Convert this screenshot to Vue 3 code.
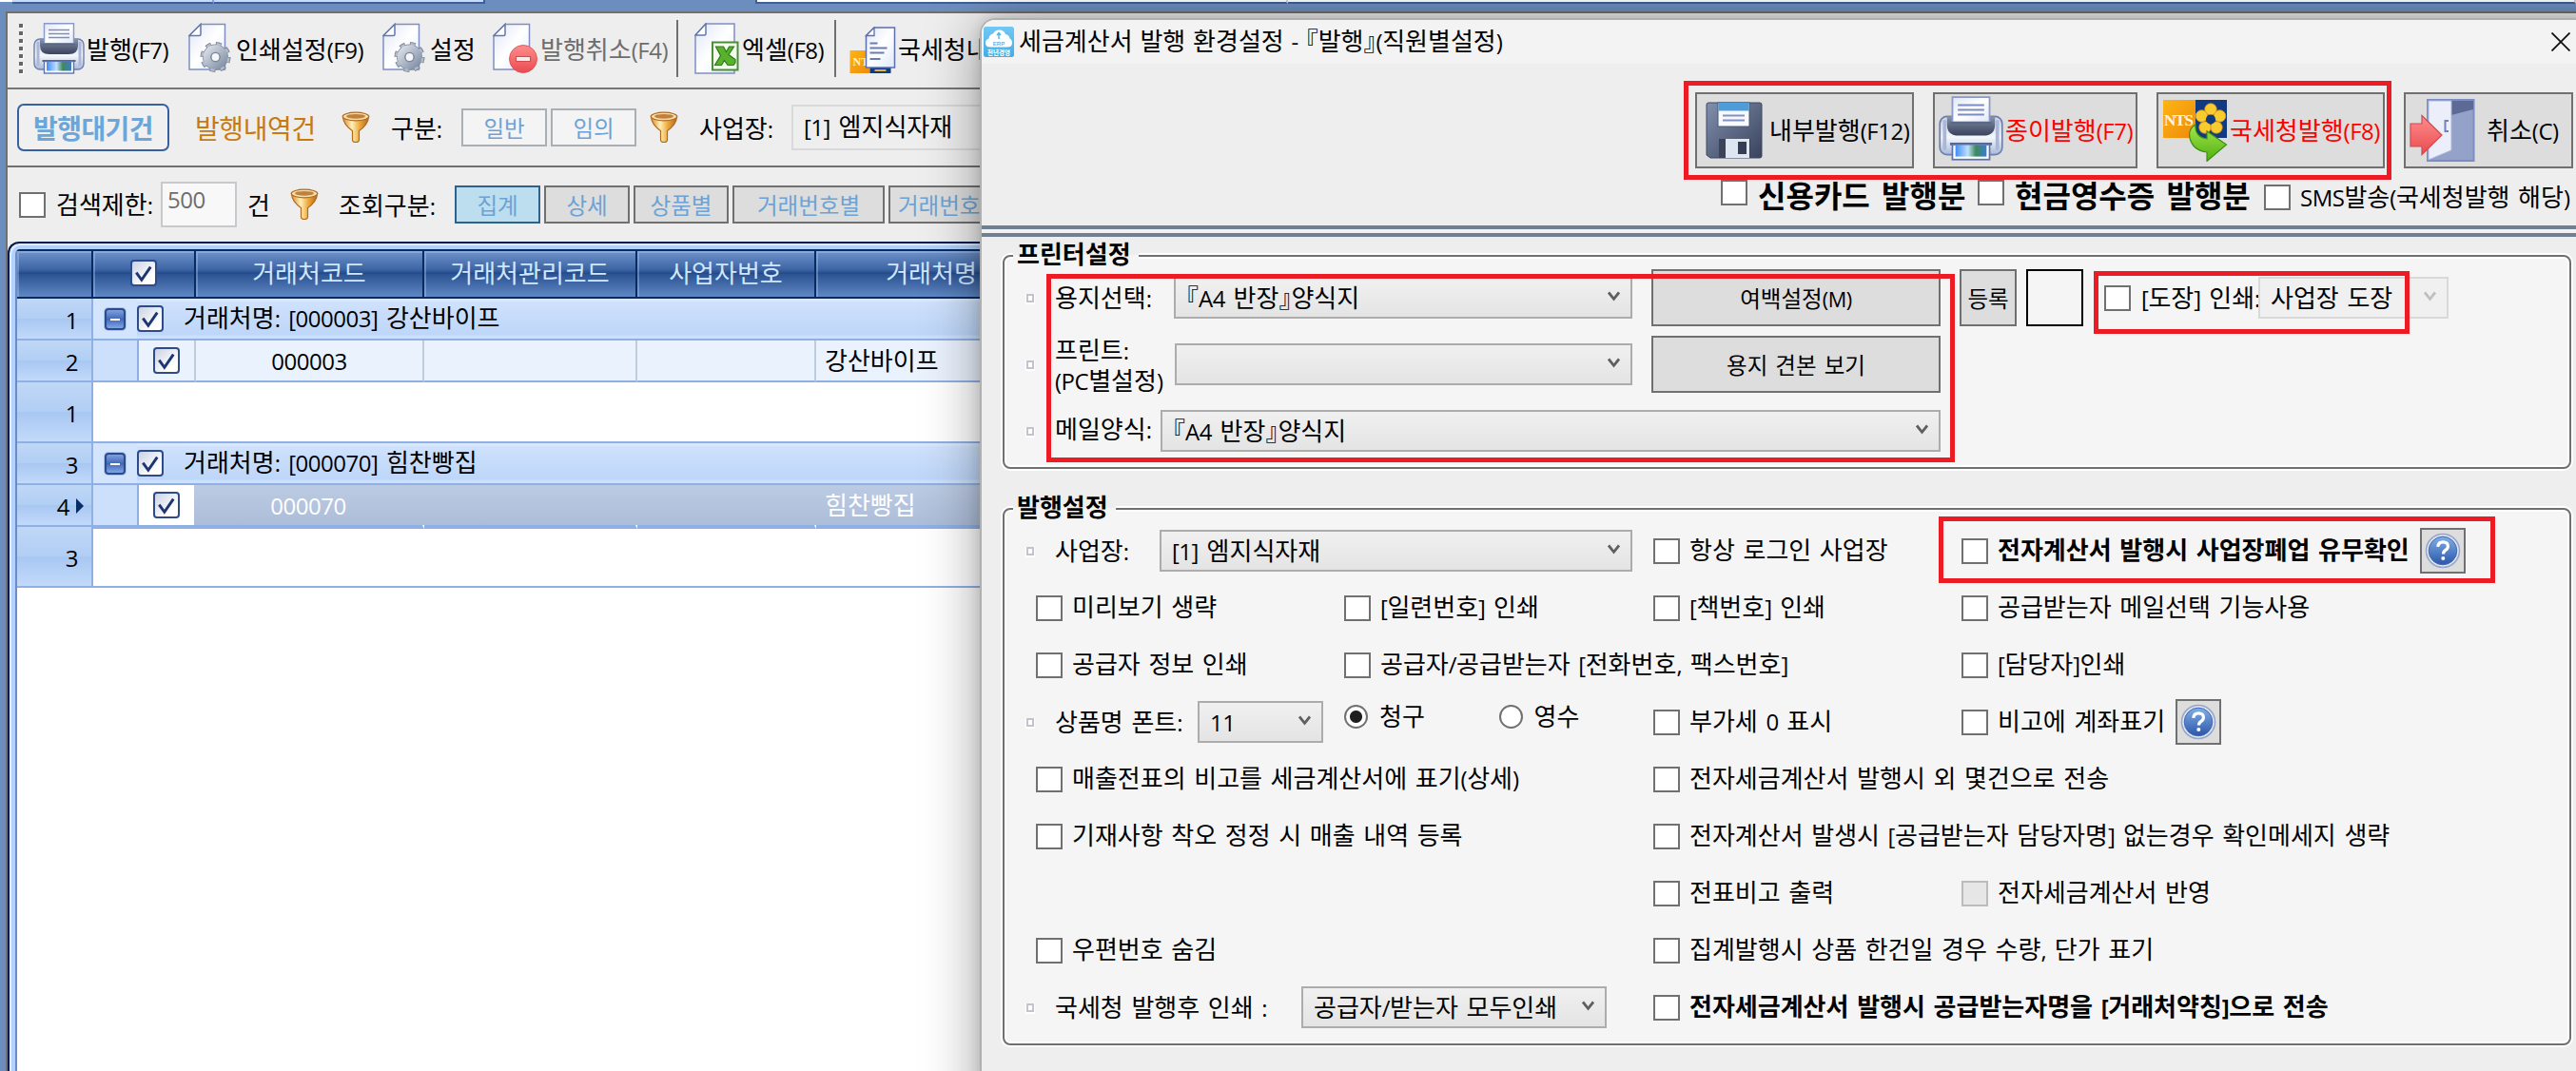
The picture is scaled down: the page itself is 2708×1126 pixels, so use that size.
<template>
    <div class="screen">
        <!-- Shared icon shapes -->
        <svg class="sprite" aria-hidden="true">
            <defs>
                <linearGradient id="gPaper" x1="0" y1="0" x2="1" y2="1">
                    <stop offset="0" stop-color="#dfe6f5" />
                    <stop offset=".5" stop-color="#ffffff" />
                    <stop offset="1" stop-color="#dfe8f8" />
                </linearGradient>
                <linearGradient id="gBody" x1="0" y1="0" x2="0" y2="1">
                    <stop offset="0" stop-color="#c9d2e6" />
                    <stop offset=".55" stop-color="#f4f7fb" />
                    <stop offset="1" stop-color="#a9b8d8" />
                </linearGradient>
                <linearGradient id="gRoller" x1="0" y1="0" x2="0" y2="1">
                    <stop offset="0" stop-color="#8793ad" />
                    <stop offset=".5" stop-color="#5d6880" />
                    <stop offset="1" stop-color="#39435c" />
                </linearGradient>
                <linearGradient id="gPhoto" x1="0" y1="0" x2="1" y2="0">
                    <stop offset="0" stop-color="#3f8dfa" />
                    <stop offset=".4" stop-color="#bfe0ff" />
                    <stop offset=".65" stop-color="#3d8a5a" />
                    <stop offset="1" stop-color="#3c7cd0" />
                </linearGradient>
                <linearGradient id="gGear" x1="0" y1="0" x2="1" y2="1">
                    <stop offset="0" stop-color="#d7dde6" />
                    <stop offset="1" stop-color="#8592a8" />
                </linearGradient>
                <linearGradient id="gGold" x1="0" y1="0" x2="1" y2="0">
                    <stop offset="0" stop-color="#d98a2b" />
                    <stop offset=".35" stop-color="#fff0b8" />
                    <stop offset=".65" stop-color="#eda93c" />
                    <stop offset="1" stop-color="#b5651a" />
                </linearGradient>
                <linearGradient id="gRed" x1="0" y1="0" x2="0" y2="1">
                    <stop offset="0" stop-color="#ff8d8d" />
                    <stop offset="1" stop-color="#e94b50" />
                </linearGradient>
                <linearGradient id="gSteel" x1="0" y1="0" x2="1" y2="1">
                    <stop offset="0" stop-color="#8190ac" />
                    <stop offset="1" stop-color="#39425c" />
                </linearGradient>
                <linearGradient id="gSky" x1="0" y1="0" x2="0" y2="1">
                    <stop offset="0" stop-color="#72c8f3" />
                    <stop offset="1" stop-color="#43ade6" />
                </linearGradient>
                <linearGradient id="gOrange" x1="0" y1="0" x2="1" y2="1">
                    <stop offset="0" stop-color="#fdb515" />
                    <stop offset="1" stop-color="#ee8a0a" />
                </linearGradient>
                <linearGradient id="gGreen" x1="0" y1="0" x2="0" y2="1">
                    <stop offset="0" stop-color="#a5e84a" />
                    <stop offset="1" stop-color="#4fae12" />
                </linearGradient>
                <linearGradient id="gHelp" x1="0" y1="0" x2="0" y2="1">
                    <stop offset="0" stop-color="#7fb0e6" />
                    <stop offset="1" stop-color="#2c56ab" />
                </linearGradient>
            </defs>

            <symbol id="printer" viewBox="0 0 54 54">
                <rect x="1" y="17" width="52" height="32" rx="6" fill="url(#gBody)" stroke="#6f7fae" stroke-width="1.4" />
                <path d="M5 20v25M49 20v25" stroke="#aab7d6" stroke-width="3" />
                <path d="M7 17h40v7q0 9-10 9H17q-10 0-10-9z" fill="url(#gRoller)" />
                <path d="M11.500 .800h31v21h-31z" fill="url(#gPaper)" stroke="#8a99c8" stroke-width="1.4" />
                <path d="M16 7.500h22M16 11.500h22M16 15.500h22" stroke="#7c8cc0" stroke-width="1.5" />
                <path d="M10 22.500h34" stroke="#5b6886" stroke-width="2" />
                <path d="M9.500 40h35" stroke="#56648c" stroke-width="2" />
                <rect x="11.500" y="40.500" width="31" height="12.500" fill="#fff" stroke="#5f73ae" stroke-width="1.400" />
                <rect x="14" y="41" width="26" height="9.500" fill="url(#gPhoto)" />
            </symbol>

            <symbol id="page" viewBox="0 0 48 54">
                <path d="M1 13.500 13 1.500h25.500V49H1z" fill="url(#gPaper)" stroke="#7f8ec4" stroke-width="1.500" />
                <path d="M1 13.500 13 1.500v10.500q0 1.500-1.500 1.500z" fill="#fff" stroke="#6577b0" stroke-width="1.500" />
            </symbol>

            <symbol id="gear" viewBox="0 0 36 36">
                <circle cx="18" cy="18" r="14.500" fill="none" stroke="#7c8899" stroke-width="5" stroke-dasharray="6 5.390" />
                <circle cx="18" cy="18" r="9.500" fill="none" stroke="#7c8899" stroke-width="9.500" />
                <circle cx="18" cy="18" r="14" fill="none" stroke="#b4bcc9" stroke-width="4" stroke-dasharray="4.400 6.600" stroke-dashoffset="-.8" />
                <circle cx="18" cy="18" r="9.500" fill="none" stroke="url(#gGear)" stroke-width="8" />
                <circle cx="18" cy="18" r="4.800" fill="#f4f6f9" stroke="#7c8899" stroke-width="1.300" />
            </symbol>

            <symbol id="funnel" viewBox="0 0 30 34">
                <path d="M1.500 6q.5 8 10 14.500V30q0 2.500 3.500 2.500t3.500-2.500v-9.500Q28 14 28.500 6z" fill="url(#gGold)" stroke="#b06a22" stroke-width="1.200" />
                <ellipse cx="15" cy="5.500" rx="13.800" ry="4.300" fill="#f6dfa8" stroke="#b06a22" stroke-width="1.200" />
                <ellipse cx="15" cy="5.300" rx="10" ry="2.400" fill="#c08040" />
            </symbol>

            <symbol id="help" viewBox="0 0 38 38">
                <circle cx="19" cy="19" r="17.500" fill="#dfe6f3" stroke="#97a5c8" stroke-width="1.500" />
                <circle cx="19" cy="19" r="14.800" fill="url(#gHelp)" stroke="#4468ad" />
                <path d="M13.800 14.800q.4-5 5.400-5 5.200 0 5.200 4.400 0 2.600-2.500 4.200-2.400 1.500-2.400 4" fill="none" stroke="#fff" stroke-width="3.200" />
                <circle cx="19.300" cy="27" r="2" fill="#fff" />
            </symbol>

            <symbol id="tick" viewBox="0 0 28 28">
                <path d="M5 13.500 11.500 22.500 22.500 6.500" fill="none" stroke="#1d3571" stroke-width="3.400" />
            </symbol>

            <symbol id="chevron" viewBox="0 0 13 11">
                <path d="M1 1.500 6.500 8.300 12 1.500" fill="none" stroke="currentColor" stroke-width="2.800" />
            </symbol>
        </svg>

        <!-- Document tabs above the frame -->
        <div class="tab-strip">
            <div class="tab-blue first"></div>
            <div class="tab-blue second"></div>
            <div class="tab-gap"></div>
            <div class="tab-white"></div>
            <div class="tab-white rest"></div>
        </div>

        <div class="frame">
            <div class="window">
                <!-- Main toolbar -->
                <div class="toolbar">
                    <div class="grip"><i v-for="n in 7" :key="n"></i></div>
                    <div class="tool t-issue">
                        <svg class="ic54"><use href="#printer" /></svg>
                        <T text="발행(F7)" />
                    </div>
                    <div class="tool t-print">
                        <svg class="ic-page" viewBox="0 0 48 54">
                            <use href="#page" width="48" height="54" />
                            <use href="#gear" x="11.500" y="19" width="34" height="34" />
                        </svg>
                        <T text="인쇄설정(F9)" />
                    </div>
                    <div class="tool t-setup">
                        <svg class="ic-page" viewBox="0 0 48 54">
                            <use href="#page" width="48" height="54" />
                            <use href="#gear" x="11.500" y="19" width="34" height="34" />
                        </svg>
                        <T text="설정" />
                    </div>
                    <div class="tool t-cancel">
                        <svg class="ic-page" viewBox="0 0 48 54">
                            <use href="#page" width="48" height="54" />
                            <circle cx="32" cy="38" r="14.500" fill="url(#gRed)" stroke="#d9484c" stroke-width=".8" />
                            <rect x="24.500" y="35.500" width="15" height="5" fill="#fbe9ea" stroke="#d04a50" />
                        </svg>
                        <T text="발행취소(F4)" />
                    </div>
                    <div class="sep"></div>
                    <div class="tool t-excel">
                        <svg class="ic-page" viewBox="0 0 48 54">
                            <path d="M1 13 12 1h30v52H1z" fill="url(#gPaper)" stroke="#7f8ec4" stroke-width="1.500" />
                            <path d="M1 13 12 1v10.500q0 1.500-1.500 1.500z" fill="#fff" stroke="#6577b0" stroke-width="1.500" />
                            <rect x="19" y="20.500" width="26.500" height="29" fill="#f4fbef" stroke="#4c8e37" stroke-width="2" />
                            <path d="M22.500 25h8l3 5.500 3-5.500h5l-5.500 8.500 7 5v3.500l-2 2.500h-6l-3.500-5-3 5h-7l6-10z" fill="#58b22c" stroke="#2e7a1c" stroke-width="1.200" />
                        </svg>
                        <T text="엑셀(F8)" />
                    </div>
                    <div class="sep"></div>
                    <div class="tool t-nts">
                        <svg class="ic-nts" viewBox="0 0 48 50">
                            <rect x="0" y="25" width="21" height="24" fill="url(#gOrange)" />
                            <text x="3" y="41" class="nts-sm">NT</text>
                            <rect x="21" y="40" width="22" height="9" fill="#12397f" />
                            <path d="M26 46h12" stroke="#e4b52c" stroke-width="2" />
                            <path d="M17 9.500 25.500 1H47v42H17z" fill="url(#gPaper)" stroke="#5c6fae" stroke-width="1.500" />
                            <path d="M17 9.500 25.500 1v8.500z" fill="#fff" stroke="#5c6fae" stroke-width="1.300" />
                            <path d="M21 17.500h8M21 22.500h18M21 27.500h15M21 34h11" stroke="#6b7cb4" stroke-width="2" />
                        </svg>
                        <T text="국세청내" />
                    </div>
                </div>

                <!-- Filter row -->
                <div class="filters">
                    <button class="mode active">발행대기건</button>
                    <button class="mode history">발행내역건</button>
                    <svg class="funnel f1"><use href="#funnel" /></svg>
                    <T class="w-kind" text="구분:" />
                    <button class="chip pale">일반</button>
                    <button class="chip pale">임의</button>
                    <svg class="funnel f2"><use href="#funnel" /></svg>
                    <T class="w-place" text="사업장:" />
                    <div class="place-box"><T text="[1] 엠지식자재" /></div>
                </div>

                <!-- Search row -->
                <div class="search">
                    <span class="check"></span>
                    <T class="w-limit" text="검색제한:" />
                    <div class="limit-box"><T text="500" /></div>
                    <T class="w-count" text="건" />
                    <svg class="funnel f3"><use href="#funnel" /></svg>
                    <T class="w-view" text="조회구분:" />
                    <button v-for="(view, i) in views" :key="view" class="chip" :class="['v' + i, { on: i === 0 }]">{{ view }}</button>
                </div>

                <!-- Customer grid -->
                <div class="grid">
                    <div class="grid-inner">
                        <div class="g-head">
                            <div class="h-cell c-num"></div>
                            <div class="h-cell c-check"><span class="gcheck"><svg><use href="#tick" /></svg></span></div>
                            <div class="h-cell c-code">거래처코드</div>
                            <div class="h-cell c-manage">거래처관리코드</div>
                            <div class="h-cell c-biz">사업자번호</div>
                            <div class="h-cell c-name">거래처명</div>
                        </div>
                        <template v-for="group in groups" :key="group.code">
                            <div class="g-row">
                                <div class="num"><T :text="group.no" /></div>
                                <div class="g-group">
                                    <span class="collapse"></span>
                                    <span class="gcheck"><svg><use href="#tick" /></svg></span>
                                    <T class="g-title" :text="`거래처명: [${group.code}] ${group.name}`" />
                                </div>
                            </div>
                            <div class="g-row" :class="{ selected: group.selected }">
                                <div class="num">
                                    <T :text="group.childNo" />
                                    <i v-if="group.selected" class="pointer"></i>
                                </div>
                                <div class="indent"></div>
                                <div class="d-cell d-check"><span class="gcheck"><svg><use href="#tick" /></svg></span></div>
                                <div class="d-cell c-code"><T :text="group.code" /></div>
                                <div class="d-cell c-manage"></div>
                                <div class="d-cell c-biz"></div>
                                <div class="d-cell c-name d-name">{{ group.name }}</div>
                            </div>
                            <div class="g-row footer" :class="{ short: group.selected }">
                                <div class="num"><T :text="group.no" /></div>
                                <div class="blank"></div>
                            </div>
                        </template>
                    </div>
                </div>
            </div>
        </div>

        <!-- Settings dialog -->
        <div class="dialog">
            <div class="title-bar">
                <svg class="app-icon" viewBox="0 0 32 32">
                    <rect width="32" height="32" rx="2.500" fill="url(#gSky)" />
                    <path d="M7 21.500q-5 0-5-4.500 0-3.500 3.500-4.500Q6 8 10 7.500q2-4 6.500-4 5 0 6.500 4.500 4 .5 4.500 4.500 2.500 1 2.500 4.500 0 4.500-5 4.500z" fill="#fff" />
                    <path d="M16 13V7M14 9l2-2.500L18 9" stroke="#56b8ea" stroke-width="1.500" fill="none" />
                    <text x="16" y="19.500" class="erp">ERP</text>
                    <text x="16" y="29.500" class="erp-sub">천년경영</text>
                </svg>
                <T class="title" text="세금계산서 발행 환경설정 - 『발행』(직원별설정)" />
                <svg class="close" viewBox="0 0 20 20"><path d="M.5.500l19 19M19.500.500l-19 19" stroke="#111" stroke-width="1.800" /></svg>
            </div>

            <div class="actions">
                <button class="action a-inner">
                    <svg class="floppy" viewBox="0 0 60 60">
                        <path d="M3 1h54q2 0 2 2v54q0 2-2 2H5l-4-3V3q0-2 2-2z" fill="url(#gSteel)" stroke="#3d4866" />
                        <rect x="13" y="1" width="33" height="25" fill="#f7f9fd" stroke="#4a5878" />
                        <rect x="13.500" y="1" width="32" height="8.500" fill="#4f9cda" />
                        <path d="M18 14.500h23M18 19.500h23" stroke="#8191c4" stroke-width="2" />
                        <path d="M14 39h33v20H14z" fill="#3c4259" />
                        <path d="M21 39h25v20H21z" fill="#dde6f1" />
                        <rect x="34" y="42" width="9" height="13" fill="#353d55" />
                    </svg>
                    <T text="내부발행(F12)" />
                </button>
                <button class="action a-paper">
                    <svg class="ic70"><use href="#printer" /></svg>
                    <T text="종이발행(F7)" />
                </button>
                <button class="action a-nts">
                    <svg class="nts" viewBox="0 0 68 66">
                        <rect x="0" y="1" width="34" height="40" fill="url(#gOrange)" />
                        <text x="1" y="28" class="nts-lg">NTS</text>
                        <rect x="34" y="1" width="33" height="40" fill="#123a80" />
                        <g fill="#f8cb2e" stroke="#e09b12" stroke-width=".8">
                            <circle cx="50" cy="11" r="6.200" />
                            <circle cx="59.500" cy="18" r="6.200" />
                            <circle cx="56" cy="30" r="6.200" />
                            <circle cx="44" cy="30" r="6.200" />
                            <circle cx="40.500" cy="18" r="6.200" />
                        </g>
                        <circle cx="50" cy="21.500" r="5" fill="#123a80" />
                        <path d="M34 27q-8 5-6 14 3 13 18 15v9.500L66.500 48 46 34v8q-13-2-12-15z" fill="url(#gGreen)" stroke="#3b8f12" stroke-width="1.200" />
                    </svg>
                    <T text="국세청발행(F8)" />
                </button>
                <button class="action a-close">
                    <svg class="door" viewBox="0 0 70 66">
                        <rect x="19" y="1" width="48.500" height="64" fill="#94a2ca" stroke="#7c8cc4" stroke-width="2" />
                        <path d="M44 2h23v9L44 17z" fill="#5d6a95" />
                        <path d="M20 2h24v52L20 64z" fill="#eceff9" stroke="#a9b5db" />
                        <path d="M41 23h-3.500v11H41" fill="none" stroke="#7182bb" stroke-width="2" />
                        <path d="M1 26h12v-8.500L34 38 13 58.500V50H1z" fill="url(#gRed)" stroke="#cf4a50" stroke-width="1.200" />
                    </svg>
                    <T text="취소(C)" />
                </button>
            </div>
            <div class="sends">
                <span class="check raised"></span><b class="w-card">신용카드 발행분</b>
                <span class="check raised"></span><b class="w-cash">현금영수증 발행분</b>
                <span class="check"></span>
                <T class="w-sms" text="SMS발송(국세청발행 해당)" />
            </div>
            <div class="divider"></div>

            <div class="panel printer-panel">
                <div class="legend">프린터설정</div>
                <div class="line">
                    <i class="bullet"></i>
                    <T class="label" text="용지선택:" />
                    <div class="combo w-paper"><T text="『A4 반장』양식지" /><svg><use href="#chevron" /></svg></div>
                    <button class="plain"><T text="여백설정(M)" /></button>
                    <button class="plain small">등록</button>
                    <div class="stamp"></div>
                    <span class="check"></span>
                    <T class="w-stamp" text="[도장] 인쇄:" />
                    <div class="combo disabled"><T text="사업장 도장" /><svg><use href="#chevron" /></svg></div>
                </div>
                <div class="line">
                    <i class="bullet"></i>
                    <div class="label two">
                        <T text="프린트:" />
                        <T text="(PC별설정)" />
                    </div>
                    <div class="combo w-printer"><svg><use href="#chevron" /></svg></div>
                    <button class="plain">용지 견본 보기</button>
                </div>
                <div class="line">
                    <i class="bullet"></i>
                    <T class="label mail" text="메일양식:" />
                    <div class="combo w-mail"><T text="『A4 반장』양식지" /><svg><use href="#chevron" /></svg></div>
                </div>
            </div>

            <div class="panel issue-panel">
                <div class="legend issue">발행설정</div>
                <div class="options">
                    <div class="field r1">
                        <i class="bullet"></i>
                        <T class="label mail" text="사업장:" />
                        <div class="combo w-office"><T text="[1] 엠지식자재" /><svg><use href="#chevron" /></svg></div>
                    </div>
                    <div class="field r4">
                        <i class="bullet"></i>
                        <T class="label font" text="상품명 폰트:" />
                        <div class="combo w-size"><T text="11" /><svg><use href="#chevron" /></svg></div>
                    </div>
                    <div class="radios">
                        <span class="radio on"></span><span class="w-radio">청구</span>
                        <span class="radio"></span><span class="w-radio">영수</span>
                    </div>
                    <div class="field r9">
                        <i class="bullet"></i>
                        <T class="label after" text="국세청 발행후 인쇄 :" />
                        <div class="combo w-after"><T text="공급자/받는자 모두인쇄" /><svg><use href="#chevron" /></svg></div>
                    </div>
                    <div v-for="opt in options" :key="opt.text" class="option" :class="{ strong: opt.bold }"
                        :style="{ gridArea: `${opt.row} / ${opt.col}` }">
                        <span class="check" :class="{ off: opt.off }"></span>
                        <T :text="opt.text" />
                        <button v-if="opt.help" class="help"><svg><use href="#help" /></svg></button>
                    </div>
                </div>
            </div>
        </div>

        <!-- Red highlight frames -->
        <div class="mark m-actions"></div>
        <div class="mark m-printer"></div>
        <div class="mark m-stamp"></div>
        <div class="mark m-closed"></div>
    </div>
</template>

<script setup>
import { h } from 'vue'

// Latin runs and corner brackets get their own metrics inside Korean text
const T = (props) => h('span', { class: 'ui-text' }, props.text.split(/([\x21-\x7e]+|[『』])/).map((part) => {
    if (/^[『』]$/.test(part)) return h('span', { class: 'ui-half' }, part)
    if (/^[\x21-\x7e]+$/.test(part)) return h('span', { class: 'ui-latin' }, part)
    return part
}))
T.props = ['text']

const views = ['집계', '상세', '상품별', '거래번호별', '거래번호']

const groups = [
    { no: '1', childNo: '2', code: '000003', name: '강산바이프', selected: false },
    { no: '3', childNo: '4', code: '000070', name: '힘찬빵집', selected: true }
]

const options = [
    { row: 1, col: 3, text: '항상 로그인 사업장' },
    { row: 1, col: 4, text: '전자계산서 발행시 사업장폐업 유무확인', bold: true, help: true },
    { row: 2, col: 1, text: '미리보기 생략' },
    { row: 2, col: 2, text: '[일련번호] 인쇄' },
    { row: 2, col: 3, text: '[책번호] 인쇄' },
    { row: 2, col: 4, text: '공급받는자 메일선택 기능사용' },
    { row: 3, col: 1, text: '공급자 정보 인쇄' },
    { row: 3, col: 2, text: '공급자/공급받는자 [전화번호, 팩스번호]' },
    { row: 3, col: 4, text: '[담당자]인쇄' },
    { row: 4, col: 3, text: '부가세 0 표시' },
    { row: 4, col: 4, text: '비고에 계좌표기', help: true },
    { row: 5, col: 1, text: '매출전표의 비고를 세금계산서에 표기(상세)' },
    { row: 5, col: 3, text: '전자세금계산서 발행시 외 몇건으로 전송' },
    { row: 6, col: 1, text: '기재사항 착오 정정 시 매출 내역 등록' },
    { row: 6, col: 3, text: '전자계산서 발생시 [공급받는자 담당자명] 없는경우 확인메세지 생략' },
    { row: 7, col: 3, text: '전표비고 출력' },
    { row: 7, col: 4, text: '전자세금계산서 반영', off: true },
    { row: 8, col: 1, text: '우편번호 숨김' },
    { row: 8, col: 3, text: '집계발행시 상품 한건일 경우 수량, 단가 표기' },
    { row: 9, col: 3, text: '전자세금계산서 발행시 공급받는자명을 [거래처약칭]으로 전송', bold: true }
]
</script>

<style>
body {
    margin: 0;
}

.ui-text {
    white-space: nowrap;
}

.ui-latin {
    font-family: "Open Sans", "Noto Sans", sans-serif;
    font-size: 0.923em;
    letter-spacing: -0.02em;
    line-height: 1;
}

.ui-half {
    font-feature-settings: "halt";
}
</style>

<style scoped>
.screen {
    position: relative;
    display: flex;
    flex-direction: column;
    width: 2708px;
    height: 1126px;
    overflow: hidden;
    background: #6c8ebf;
    font-family: "Noto Sans CJK KR", "Noto Sans", sans-serif;
    font-size: 26px;
    line-height: 32px;
    word-spacing: 2.8px;
    color: #000;
    white-space: nowrap;
}

.screen *,
.mark {
    box-sizing: border-box;
}

.sprite {
    position: absolute;
    width: 0;
    height: 0;
}

button {
    font: inherit;
    word-spacing: inherit;
    padding: 0;
    margin: 0;
    border-radius: 0;
    color: inherit;
    flex-shrink: 0;
}

svg,
i,
.check {
    flex-shrink: 0;
    display: block;
}

/* Tabs */
.tab-strip {
    display: flex;
    height: 4px;
    flex-shrink: 0;
    padding-left: 13px;
    background: linear-gradient(#fff 2px, #6c8ebf 2px);
}

.tab-blue {
    border-bottom: 2px solid #415f96;
    border-right: 2px solid #7f9fe0;
    background: #c7dafa;
}

.tab-blue.first {
    width: 212px;
}

.tab-blue.second {
    width: 285px;
    border-right-color: #415f96;
}

.tab-gap {
    width: 284px;
    background: #6c8ebf;
}

.tab-white {
    width: 560px;
    border-bottom: 2px solid #415f96;
    border-right: 2px solid #ccd2dc;
    border-left: 2px solid #415f96;
    background: #fff;
}

.tab-white.rest {
    flex: 1;
    border-left: 0;
}

/* Frame */
.frame {
    flex: 1;
    display: flex;
    padding: 8px 0 0 6px;
}

.window {
    flex: 1;
    display: flex;
    flex-direction: column;
    border-top: 2px solid #707070;
    border-left: 2px solid #707070;
    background: #eee;
}

/* Toolbar */
.toolbar {
    display: flex;
    align-items: center;
    height: 80px;
    padding: 0 0 4px 12px;
    border-bottom: 2px solid #767676;
}

.grip {
    width: 15px;
    display: flex;
    flex-direction: column;
    gap: 4px;
}

.grip i {
    width: 4px;
    height: 4px;
    background: #666;
    box-shadow: 1px 1px 0 #fff;
}

.tool {
    display: flex;
    align-items: center;
    gap: 2px;
}

.t-issue { width: 163px; }
.t-print { width: 204px; }
.t-setup { width: 116px; }
.t-cancel { width: 193px; color: #6d6d6d; }
.t-excel { width: 147px; margin-left: 17px; }
.t-nts { margin-left: 14px; }

.ic54 {
    width: 54px;
    height: 54px;
}

.ic-page {
    width: 48px;
    height: 54px;
}

.ic-nts {
    width: 49px;
    height: 50px;
    margin-top: 4px;
}

.nts-sm {
    font: bold 12px "Liberation Serif", serif;
    fill: #fff3d0;
}

.sep {
    width: 2px;
    height: 60px;
    background: #707070;
}

/* Filter row */
.filters {
    display: flex;
    align-items: center;
    height: 82px;
    padding-left: 10px;
    border-bottom: 2px solid #707070;
}

.mode {
    border: 0;
    background: none;
    font-size: 28px;
}

.mode.active {
    width: 160px;
    height: 50px;
    border: 2px solid #36609f;
    border-radius: 7px;
    background: #f0f0f0;
    color: #6ca6d9;
    font-weight: bold;
    letter-spacing: -0.6px;
}

.mode.history {
    width: 154px;
    margin-left: 27px;
    text-align: left;
    color: #c67a10;
    letter-spacing: -0.4px;
}

.funnel {
    width: 30px;
    height: 34px;
}

.f1 { margin-right: 22px; }
.f2 { margin: 0 22px 0 14px; }
.f3 { margin-right: 21px; }

.w-kind { width: 74px; margin-top: -1px; }
.w-place { width: 97px; margin-top: -1px; }

.chip {
    height: 40px;
    margin-right: 4px;
    border: 2px solid #707070;
    background: #ddd;
    color: #6ca3d4;
    font-size: 23.500px;
    line-height: 34px;
}

.chip.pale {
    width: 90px;
    border-color: #a9afb3;
    background: #f4f4f4;
}

.chip.pale + .f2 {
    margin-left: 10px;
}

.place-box {
    flex: 1;
    height: 48px;
    border: 2px solid #d9d9d9;
    padding: 4px 0 0 11px;
}

/* Search row */
.search {
    display: flex;
    align-items: center;
    height: 78px;
    padding-left: 12px;
}

.check {
    width: 28px;
    height: 27px;
    border: 2px solid #707070;
    background: #fff;
}

.check.off {
    border-color: #bcbcbc;
    background: #e6e6e6;
}

.w-limit {
    width: 110px;
    margin: -2px 0 0 11px;
}

.limit-box {
    width: 80px;
    height: 48px;
    border: 2px solid #c8c8cd;
    background: #f8f8f8;
    padding: 0 0 0 5px;
    line-height: 30px;
    color: #6d6d6d;
}

.w-count {
    width: 45px;
    margin-left: 11px;
}

.w-view { width: 122px; }

.chip.on {
    border-color: #2c628b;
    background: #bcdeee;
}

.v0,
.v1 { width: 90px; }
.v2 { width: 100px; }
.v3 { width: 160px; }
.v4 { width: 160px; text-align: left; padding-left: 8px; }

/* Grid */
.grid {
    flex: 1;
    border: 2px solid #071a4e;
    border-radius: 12px 0 0 0;
    border-right: 0;
    border-bottom: 0;
    padding: 6px 0 0 6px;
    background: #b3d1fb;
    box-shadow: inset 2px 2px 0 #deebff;
}

.grid-inner {
    height: 100%;
    border-left: 2px solid #6c8cc7;
    border-top: 2px solid #062b66;
    border-radius: 5px 0 0 0;
    background: #fff;
}

.g-head {
    display: flex;
    height: 50px;
    border-bottom: 2px solid #062b66;
}

.h-cell {
    display: flex;
    align-items: center;
    justify-content: center;
    border-right: 2px solid #062b66;
    padding-bottom: 5px;
    color: #cfe7ff;
    background: linear-gradient(#6f93cb, #3d65a4 40%, #244a89 49%, #2c5392 51%, #6088c4);
    box-shadow: inset 2px 2px 0 rgba(190, 215, 250, 0.35);
}

.c-num { width: 80px; }
.c-check { width: 108px; }
.c-code { width: 240px; }
.c-manage { width: 224px; }
.c-biz { width: 188px; }
.c-name { width: 244px; }

.gcheck {
    width: 28px;
    height: 28px;
    flex-shrink: 0;
    border: 2px solid #2d4a8a;
    border-radius: 4px;
    background: linear-gradient(135deg, #ccd2e4, #fff 75%);
}

.gcheck svg {
    width: 24px;
    height: 24px;
}

.h-cell .gcheck {
    margin-top: 3px;
}

.g-row {
    display: flex;
    height: 44px;
}

.num {
    position: relative;
    width: 80px;
    padding: 5px 14px 0 0;
    text-align: right;
    border-right: 2px solid #8fb0e4;
    border-bottom: 2px solid #8fb0e4;
    background: linear-gradient(#c0d8f7, #b1cef4 49%, #a8c7f2 51%, #c2dafa);
}

.selected .num {
    padding-right: 23px;
}

.pointer {
    position: absolute;
    right: 8px;
    top: 14px;
    border: 8px solid transparent;
    border-left-color: #082c66;
    border-right: 0;
}

.g-group {
    flex: 1;
    display: flex;
    align-items: center;
    border-bottom: 2px solid #8fb0e4;
    padding-left: 12px;
    background: linear-gradient(#d8e8ff 2px, #cfe1fc 4px, #bed6f9 38px, #cce0fc 39px);
    box-shadow: inset 46px 0 0 #d3e4fd;
}

.collapse {
    width: 22px;
    height: 23px;
    margin-right: 12px;
    border: 2px solid #2c4a8c;
    border-radius: 4px;
    box-shadow: 0 0 0 1px #a9c3ec;
    background: linear-gradient(#fff, #fff) center 9px / 10px 2px no-repeat, linear-gradient(#7ea0de, #4468b8 50%, #7ea6e6);
}

.g-title {
    margin-left: 21px;
    margin-top: -4px;
}

.indent {
    width: 48px;
    border-right: 2px solid #8fb0e4;
    border-bottom: 2px solid #8fb0e4;
    background: #cce0fc;
}

.d-cell {
    display: flex;
    align-items: center;
    justify-content: center;
    border-right: 2px solid #bfccdc;
    border-bottom: 2px solid #8fb0e4;
    background: #eaf2fd;
}

.d-cell .ui-text {
    margin-top: -2px;
}

.d-check {
    width: 60px;
}

.d-name {
    justify-content: flex-start;
    padding: 0 0 3px 9px;
}

.selected .d-cell {
    border-right-color: transparent;
    background: linear-gradient(#bccbe3, #abbcd8) border-box;
    border-bottom: 4px solid #8fb0e4;
    color: #fff;
}

.selected .d-check {
    width: 58px;
    background: #fff;
    border-right: 0;
}

.selected .c-code {
    width: 242px;
}

.selected {
    height: 46px;
}

.selected .indent {
    border-bottom-width: 4px;
}

.selected .num {
    height: 44px;
}

.footer {
    height: 64px;
}

.footer.short {
    height: 62px;
}

.footer .num {
    padding-top: 15px;
}

.footer.short .num {
    height: 64px;
    margin-top: -2px;
}

.blank {
    flex: 1;
    border-bottom: 2px solid #8fb0e4;
}

/* Dialog */
.dialog {
    position: absolute;
    left: 1030px;
    top: 19px;
    right: 0;
    bottom: -20px;
    overflow: hidden;
    border: 2px solid #b0b0b0;
    border-right: 0;
    border-radius: 16px 0 0 0;
    background: #eee;
}

/* Shadow the dialog casts on the window behind it */
.frame::after {
    content: "";
    position: absolute;
    left: 1030px;
    top: 19px;
    right: -60px;
    bottom: -60px;
    border-radius: 16px;
    box-shadow: 0 8px 60px rgba(0, 0, 0, 0.38), 0 0 14px rgba(0, 0, 0, 0.12);
}

.title-bar {
    display: flex;
    align-items: center;
    height: 46px;
    padding-left: 2px;
    background: #f3f3f3;
}

.app-icon {
    width: 32px;
    height: 32px;
}

.erp {
    font: bold 6px "Liberation Sans", sans-serif;
    fill: #56b8ea;
    text-anchor: middle;
}

.erp-sub {
    font: bold 6.500px "Noto Sans CJK KR", sans-serif;
    fill: #fff;
    text-anchor: middle;
}

.title {
    margin: -5px auto 0 5px;
    word-spacing: 2px;
}

.close {
    width: 20px;
    height: 20px;
    margin-right: 6px;
}

.actions {
    display: flex;
    gap: 20px;
    padding: 30px 0 0 750px;
}

.action {
    display: flex;
    align-items: center;
    height: 80px;
    border: 2px solid #707070;
    background: #ddd;
}

.action .ui-text {
    margin-top: -2px;
}

.a-inner { width: 230px; padding-left: 9px; }
.a-paper { width: 215px; padding-left: 3px; color: #f00; }
.a-nts { width: 240px; padding-left: 5px; color: #f00; }
.a-close { width: 178px; padding-left: 4px; }

.floppy {
    width: 60px;
    height: 60px;
    margin-right: 7px;
}

.ic70 {
    width: 70px;
    height: 68px;
    margin: -5px 1px 0 0;
}

.nts {
    width: 68px;
    height: 66px;
    margin-right: 2px;
}

.nts-lg {
    font: bold 17px "Liberation Serif", serif;
    letter-spacing: -1px;
    fill: #fff6dd;
}

.door {
    width: 70px;
    height: 66px;
    margin-right: 11px;
}

.sends {
    display: flex;
    align-items: center;
    height: 60px;
    padding-left: 777px;
}

.sends b {
    font-size: 32px;
    word-spacing: 5px;
    margin: -6px 0 0 11px;
}

.raised {
    margin-top: -10px;
}

.w-card { width: 231px; }
.w-cash { width: 262px; }
.w-sms { margin: -3px 0 0 10px; }

.divider {
    height: 12px;
    border: solid #708090;
    border-width: 4px 0;
    background: #f2f2f2;
}

.panel {
    width: 1649px;
    margin-left: 22px;
    border: 2px solid #707070;
    border-radius: 8px;
    background: #f5f5f5;
    box-shadow: 0 0 0 2px #fff, inset 0 0 0 2px #fff;
}

.printer-panel {
    height: 225px;
    margin-top: 19px;
}

.issue-panel {
    height: 565px;
    margin-top: 41px;
}

.legend {
    width: 132px;
    height: 26px;
    margin: -15px 0 -3px 9px;
    padding-left: 4px;
    line-height: 22px;
    font-weight: bold;
    background: linear-gradient(#eee 50%, #f5f5f5 50%);
}

.legend.issue {
    width: 108px;
    margin-bottom: 2px;
}

.line {
    display: flex;
    align-items: center;
    height: 70px;
    padding-left: 23px;
}

.bullet {
    width: 8px;
    height: 9px;
    border: 2px solid #c3c3cb;
    background: #fff;
    box-shadow: 0 1px 0 1px #fff;
}

.label {
    width: 125px;
    flex-shrink: 0;
    margin: -2px 0 0 22px;
}

.label.mail { width: 111px; }
.label.font { width: 150px; }
.label.after { width: 259px; }

.line .label.mail {
    margin-top: -6px;
}

.label.two {
    display: flex;
    flex-direction: column;
    width: 126px;
    margin-top: 0;
}

.combo {
    display: flex;
    align-items: center;
    justify-content: space-between;
    flex-shrink: 0;
    height: 44px;
    border: 2px solid #acacac;
    padding: 0 11px 0 11px;
    background: linear-gradient(#f0f0f0, #e4e4e4);
    color: #000;
}

.combo .ui-text {
    margin-top: -2px;
}

.combo svg {
    width: 13px;
    height: 11px;
    margin: -4px 0 0 auto;
    color: #5f5f5f;
}

.combo.disabled {
    width: 200px;
    border-color: #d9d9d9;
    background: #f0f0f0;
}

.combo.disabled svg {
    color: #bfbfbf;
}

.w-paper { width: 482px; }
.w-printer { width: 481px; }
.w-mail { width: 820px; }
.w-office { width: 497px; }
.w-size { width: 132px; }
.w-after { width: 321px; }

/* The office combo starts a little left of the paper one */
.r1 .combo {
    margin-left: -1px;
}

.plain {
    width: 304px;
    height: 60px;
    margin-left: 20px;
    border: 2px solid #707070;
    background: #ddd;
    font-size: 23.500px;
}

.plain.small {
    width: 60px;
}

.stamp {
    width: 60px;
    height: 60px;
    margin: 0 22px 0 10px;
    border: 2px solid #000;
}

.w-stamp {
    width: 123px;
    margin: -2px 0 0 11px;
}

.options {
    display: grid;
    grid-template-columns: 324px 325px 324px 500px;
    grid-template-rows: repeat(9, 60px);
    padding-left: 33px;
}

.field {
    display: flex;
    align-items: center;
    margin-left: -10px;
}

.r1 { grid-area: 1 / 1; }
.r4 { grid-area: 4 / 1; }
.r9 { grid-area: 9 / 1; }

.option {
    display: flex;
    align-items: center;
    min-width: 0;
}

.option .ui-text {
    margin: -4px 0 0 10px;
}

.option.strong {
    font-weight: bold;
}

.help {
    display: flex;
    align-items: center;
    justify-content: center;
    width: 48px;
    height: 48px;
    margin-left: 11px;
    border: 2px solid #707070;
    background: #ddd;
}

.help svg {
    width: 38px;
    height: 38px;
}

.radios {
    grid-area: 4 / 2;
    display: flex;
    align-items: center;
    margin-top: -12px;
}

.radio {
    width: 25px;
    height: 25px;
    flex-shrink: 0;
    border: 2px solid #707070;
    border-radius: 50%;
    background: #fff;
}

.radio.on {
    background: radial-gradient(circle, #1f1f1f 6px, #fff 7px);
}

.w-radio {
    width: 126px;
    margin: -3px 0 0 12px;
}

/* Highlight frames */
.mark {
    position: absolute;
    border: 5px solid #ed1c24;
}

.m-actions { left: 1770px; top: 85px; width: 744px; height: 104px; }
.m-printer { left: 1100px; top: 288px; width: 955px; height: 198px; }
.m-stamp { left: 2201px; top: 285px; width: 332px; height: 66px; }
.m-closed { left: 2038px; top: 543px; width: 585px; height: 70px; }
</style>
